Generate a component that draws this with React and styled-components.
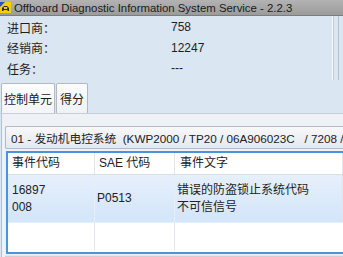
import React from 'react';
import styled, { createGlobalStyle } from 'styled-components';

const GlobalStyle = createGlobalStyle`
  html, body { margin: 0; padding: 0; }
  body {
    font-family: "Liberation Sans", "Noto Sans CJK SC", sans-serif;
    background: #dbe6f3;
  }
`;

const Window = styled.div`
  width: 343px;
  height: 257px;
  overflow: hidden;
  display: flex;
  flex-direction: column;
  background: #dbe6f3;
`;

const TitleBar = styled.div`
  height: 15px;
  flex: none;
  display: flex;
  align-items: center;
  gap: 3px;
  background: linear-gradient(#b3b3b3, #9b9b9b);
  border-bottom: 1px solid #7d7d7d;
  font-size: 11.4px;
  color: #1a1a1a;
  white-space: nowrap;
`;

const InfoPanel = styled.div`
  height: 64px;
  flex: none;
  display: flex;
`;

const Fields = styled.div`
  width: 326px;
  padding: 1px 0 0 7px;
  display: grid;
  grid-template-columns: 164px 1fr;
  grid-auto-rows: 20.5px;
  align-items: center;
  font-size: 12px;
  color: #1e1e1e;
  border-right: 1px solid #c3cad4;
  box-shadow: inset -1px 0 0 #f6f9fc;
`;

const SideStrip = styled.div`
  flex: 1;
  margin-left: 4px;
  border-left: 1px solid #b9c0ca;
`;

const TabStrip = styled.div`
  height: 33px;
  flex: none;
  display: flex;
  align-items: flex-end;
  padding-left: 1px;
  border-bottom: 1px solid #c9cfd8;
`;

const Tab = styled.div`
  height: 30px;
  padding: 0 ${p => p.$pad}px;
  display: flex;
  align-items: center;
  box-sizing: border-box;
  font-size: 12px;
  color: #1a1a1a;
  background: ${p => (p.$active ? 'linear-gradient(#fdfdfe, #f2f5f9)' : 'linear-gradient(#fbfcfd, #eef2f7)')};
  border: 1px solid #b2b9c3;
  border-bottom: none;
  border-radius: 2px 2px 0 0;
  margin-right: 1px;
`;

const Content = styled.div`
  flex: 1;
  margin-left: 1px;
  padding: 12px 0 0 3px;
  background: #eef1f6;
  border-left: 1px solid #b8c0cb;
  display: flex;
  flex-direction: column;
`;

const Combo = styled.div`
  height: 21px;
  display: flex;
  align-items: center;
  padding-left: 5px;
  font-size: 11.7px;
  color: #222;
  white-space: nowrap;
  overflow: hidden;
  background: linear-gradient(#f7f8fa, #e4e8ed);
  border: 1px solid #b3bac4;
  border-right: none;
  border-radius: 2px 0 0 2px;
`;

const Table = styled.div`
  margin: 2px 0 0 1px;
  height: 99px;
  flex: none;
  display: flex;
  flex-direction: column;
  background: #fff;
  border-top: 2px solid #4c93de;
  border-left: 2px solid #4c93de;
  border-bottom: 2px solid #4c93de;
`;

const Row = styled.div`
  display: grid;
  grid-template-columns: 87px 80px 1fr;
  height: ${p => p.$h}px;
  flex: none;
  background: ${p => p.$bg || '#fff'};
  border-bottom: 1px solid ${p => p.$line || 'transparent'};
  font-size: 12px;
  color: #222;
`;

const Cell = styled.div`
  display: flex;
  flex-direction: column;
  justify-content: center;
  padding-left: ${p => p.$pad}px;
  line-height: 17px;
  border-right: 1px solid ${p => p.$line || '#e2e6eb'};
  white-space: nowrap;
`;

const Footer = styled.div`
  flex: 1;
  margin-top: 1px;
  background: #cdd1d6;
  border-top: 1px solid #e4e8ed;
`;

const AppIcon = () => (
  <svg width="11" height="11" viewBox="0 0 11 11">
    <rect x="0" y="0" width="11" height="11" fill="#f4cf00" />
    <path d="M0 0H5L0 5Z" fill="#2452c8" />
    <path d="M2 5.5h1.5V4h4v1.5H9V9H7.5v-1h-4v1H2Z" fill="#2a2a2a" />
    <rect x="4" y="5" width="3" height="2" fill="#f4cf00" />
  </svg>
);

export default function App() {
  return (
    <Window>
      <GlobalStyle />
      <TitleBar>
        <AppIcon />
        <span>Offboard Diagnostic Information System Service - 2.2.3</span>
      </TitleBar>
      <InfoPanel>
        <Fields>
          <span>进口商：</span><span>758</span>
          <span>经销商：</span><span>12247</span>
          <span>任务：</span><span>---</span>
        </Fields>
        <SideStrip />
      </InfoPanel>
      <TabStrip>
        <Tab $active $pad={2}>控制单元</Tab>
        <Tab $pad={3}>得分</Tab>
      </TabStrip>
      <Content>
        <Combo>01 - 发动机电控系统&nbsp;&nbsp;(KWP2000 / TP20 / 06A906023C&nbsp;&nbsp;&nbsp;/ 7208 / I</Combo>
        <Table>
          <Row $h={21} $line="#d9dee5">
            <Cell $pad={4}>事件代码</Cell>
            <Cell $pad={4}>SAE 代码</Cell>
            <Cell $pad={5}>事件文字</Cell>
          </Row>
          <Row $h={47} $bg="linear-gradient(#e6f0fb, #d3e5f9)">
            <Cell $pad={4} $line="#e8eef6"><span>16897</span><span>008</span></Cell>
            <Cell $pad={2} $line="#e8eef6">P0513</Cell>
            <Cell $pad={2}><span>错误的防盗锁止系统代码</span><span>不可信信号</span></Cell>
          </Row>
          <Row $h={27}>
            <Cell $pad={4} />
            <Cell $pad={4} />
            <Cell $pad={4} $line="transparent" />
          </Row>
        </Table>
        <Footer />
      </Content>
    </Window>
  );
}
